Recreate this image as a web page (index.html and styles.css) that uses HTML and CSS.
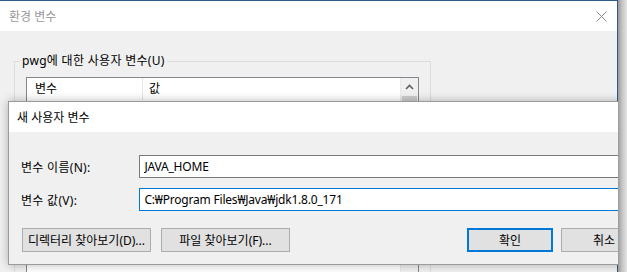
FILE: index.html
```html
<!DOCTYPE html>
<html lang="ko">
<head>
  <meta charset="UTF-8" />
  <title>환경 변수</title>
  <link rel="stylesheet" href="styles.css">
</head>
<body>
  <div class="desk">
    <div class="env-window">
      <div class="titlebar inactive">
        <span class="title">환경 변수</span>
        <svg class="close" width="11" height="11" viewBox="0 0 11 11">
          <path d="M0.5 0.5 L10.5 10.5 M10.5 0.5 L0.5 10.5" stroke="#8a8a8a" stroke-width="1" fill="none" />
        </svg>
      </div>
      <div class="env-body">
        <fieldset class="group">
          <legend>pwg에 대한 사용자 변수(U)</legend>
          <div class="listview">
            <div class="lv-main">
              <div class="lv-head">
                <div class="col col-name">변수</div>
                <div class="col col-value">값</div>
              </div>
            </div>
            <div class="lv-scroll">
              <div class="scroll-up">
                <svg width="9" height="6" viewBox="0 0 9 6">
                  <path d="M1 5 L4.5 1.5 L8 5" stroke="#606060" stroke-width="1.6" fill="none" />
                </svg>
              </div>
              <div class="scroll-thumb"></div>
            </div>
          </div>
        </fieldset>
      </div>
    </div>

    <div class="dialog">
      <div class="titlebar">
        <span class="title">새 사용자 변수</span>
      </div>
      <div class="dialog-body">
        <div class="field">
          <label for="varName">변수 이름(N):</label>
          <input type="text" id="varName" value="JAVA_HOME" />
        </div>
        <div class="field">
          <label for="varValue">변수 값(V):</label>
          <input type="text" id="varValue" class="focused" value="C:₩Program Files₩Java₩jdk1.8.0_171" />
        </div>
        <div class="buttons">
          <button class="btn">디렉터리 찾아보기(D)...</button>
          <button class="btn">파일 찾아보기(F)...</button>
          <button class="btn btn-ok">확인</button>
          <button class="btn btn-cancel">취소</button>
        </div>
      </div>
    </div>

    <div class="edge-shadow"></div>
  </div>
</body>
</html>
```

FILE: styles.css
```css
* {
  box-sizing: border-box;
}

body {
  margin: 0;
  width: 627px;
  height: 272px;
  overflow: hidden;
  background: #f0f0f0;
  font-family: "Noto Sans", "Noto Sans CJK KR", sans-serif;
  font-size: 12px;
  color: #000;
}

.desk {
  position: relative;
  width: 627px;
  height: 272px;
  overflow: hidden;
}

/* 뒤쪽 창: 환경 변수 */
.env-window {
  position: absolute;
  left: 0;
  top: 0;
  width: 618px;
  height: 300px;
  background: #f0f0f0;
  border-top: 1px solid #2d5a86;
  border-right: 1px solid #2d5a86;
}

.titlebar {
  height: 30px;
  background: #fff;
  display: flex;
  align-items: center;
  padding-left: 9px;
}

.env-window .titlebar {
  justify-content: space-between;
  padding-right: 10px;
}

.titlebar.inactive .title {
  color: #999;
}

.env-body {
  padding: 22px 0 0 14px;
}

.group {
  margin: 0;
  width: 417px;
  height: 260px;
  min-width: 0;
  border: 1px solid #dcdcdc;
  padding: 8px 0 0 5px;
}

.group legend {
  padding: 0 2px;
  line-height: 16px;
  letter-spacing: 0.3px;
}

.listview {
  margin-left: 6px;
  width: 393px;
  height: 230px;
  border: 1px solid #828790;
  background: #fff;
  display: flex;
}

.lv-main {
  flex: 1;
}

.lv-head {
  display: flex;
  height: 22px;
  line-height: 22px;
}

.col-name {
  width: 116px;
  padding-left: 8px;
  border-right: 1px solid #e5e5e5;
}

.col-value {
  flex: 1;
  padding-left: 6px;
}

.lv-scroll {
  width: 18px;
  background: #f0f0f0;
  border-left: 1px solid #e8e8e8;
}

.scroll-up {
  height: 18px;
  display: flex;
  align-items: center;
  justify-content: center;
}

.scroll-thumb {
  margin: 0 1px;
  height: 120px;
  background: #cdcdcd;
}

/* 앞쪽 창: 새 사용자 변수 */
.dialog {
  position: absolute;
  left: 8px;
  top: 101px;
  width: 650px;
  height: 164px;
  background: #f0f0f0;
  border: 1px solid #9a9a9a;
  box-shadow: 0 0 9px rgba(0, 0, 0, 0.28);
}

.dialog .titlebar {
  padding-left: 8px;
}

.dialog-body {
  padding: 23px 0 0 12px;
}

.field {
  display: flex;
  align-items: center;
  height: 23px;
}

.field + .field {
  margin-top: 10px;
}

.field label {
  width: 119px;
  letter-spacing: 0.3px;
}

.field input {
  width: 520px;
  height: 23px;
  border: 1px solid #7a7a7a;
  padding: 0 4px;
  font: inherit;
  letter-spacing: -0.2px;
  color: #000;
  background: #fff;
  outline: none;
}

.field input.focused {
  border-color: #0078d7;
}

.buttons {
  display: flex;
  margin-top: 17px;
}

.btn {
  height: 24px;
  width: 129px;
  margin-left: 1px;
  padding: 0;
  border: 1px solid #adadad;
  background: #e1e1e1;
  font: inherit;
  color: #000;
}

.btn + .btn {
  margin-left: 10px;
}

.btn.btn-ok {
  margin-left: 177px;
  width: 86px;
  border: 2px solid #0078d7;
}

.btn.btn-cancel {
  margin-left: 8px;
  width: 86px;
}

.edge-shadow {
  position: absolute;
  left: 618px;
  top: 0;
  width: 9px;
  height: 272px;
  background: linear-gradient(to right, #9a9a9a, #c4c4c4 45%, #e4e4e4);
}
```
